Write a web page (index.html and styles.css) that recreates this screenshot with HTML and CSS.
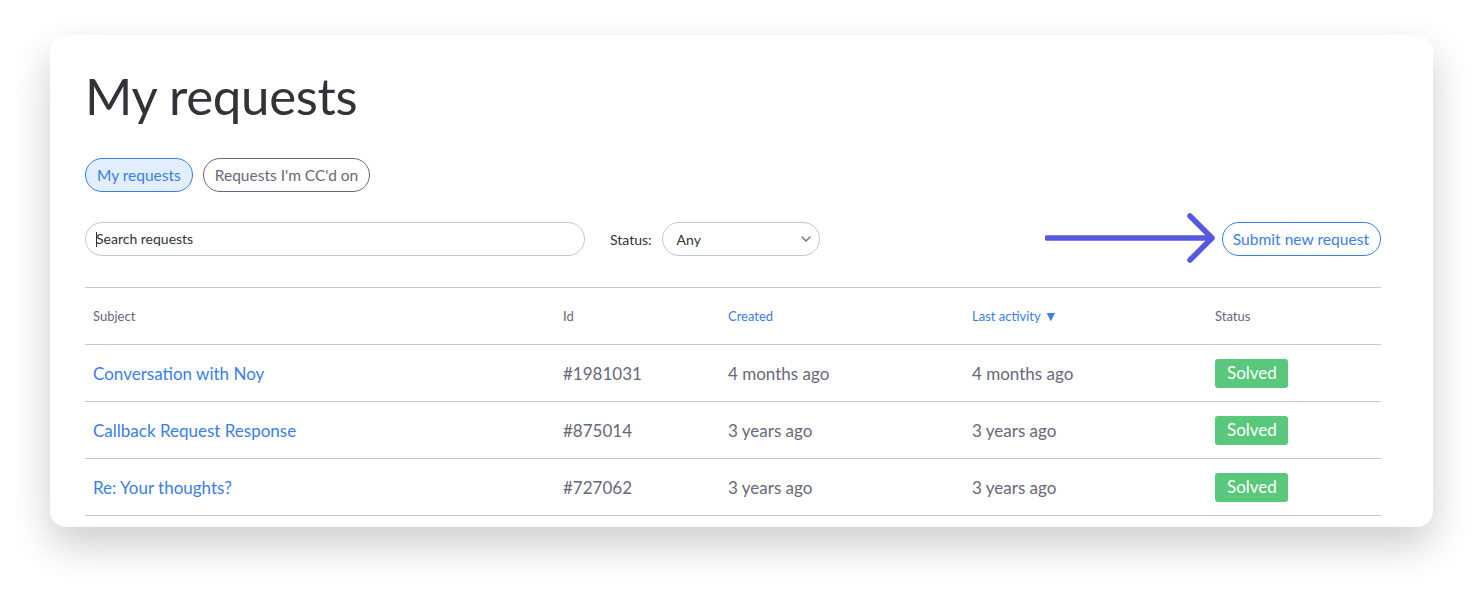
FILE: index.html
```html
<!DOCTYPE html>
<html lang="en">
<head>
  <meta charset="UTF-8" />
  <meta name="viewport" content="width=device-width, initial-scale=1.0"/>
  <title>My requests</title>
  <link rel="stylesheet" href="styles.css">
</head>
<body>
  <div class="card">
    <h1>My requests</h1>

    <nav class="tabs">
      <a class="tab active" href="#">My requests</a>
      <a class="tab" href="#">Requests I'm CC'd on</a>
    </nav>

    <div class="toolbar">
      <div class="search"><span class="caret"></span>Search requests</div>
      <label class="status-label">Status:</label>
      <div class="select">
        <span>Any</span>
        <svg class="chevron" width="10" height="6" viewBox="0 0 10 6"><path d="M1 1l4 4 4-4" fill="none" stroke="#676879" stroke-width="1.2" stroke-linecap="round" stroke-linejoin="round"/></svg>
      </div>
      <svg class="arrow" width="174" height="52" viewBox="0 0 174 52">
        <path d="M2 25H167M145 3l22 22-22 22" fill="none" stroke="#5559df" stroke-width="5.5" stroke-linecap="round" stroke-linejoin="round"/>
      </svg>
      <a class="submit" href="#">Submit new request</a>
    </div>

    <table class="requests">
      <colgroup>
        <col style="width:470px">
        <col style="width:165px">
        <col style="width:244px">
        <col style="width:243px">
        <col>
      </colgroup>
      <thead>
        <tr>
          <th>Subject</th>
          <th>Id</th>
          <th class="sort">Created</th>
          <th class="sort">Last activity <span class="tri">&#9660;</span></th>
          <th>Status</th>
        </tr>
      </thead>
      <tbody>
        <tr>
          <td><a href="#">Conversation with Noy</a></td>
          <td>#1981031</td>
          <td>4 months ago</td>
          <td>4 months ago</td>
          <td><span class="badge">Solved</span></td>
        </tr>
        <tr>
          <td><a href="#">Callback Request Response</a></td>
          <td>#875014</td>
          <td>3 years ago</td>
          <td>3 years ago</td>
          <td><span class="badge">Solved</span></td>
        </tr>
        <tr>
          <td><a href="#">Re: Your thoughts?</a></td>
          <td>#727062</td>
          <td>3 years ago</td>
          <td>3 years ago</td>
          <td><span class="badge">Solved</span></td>
        </tr>
      </tbody>
    </table>
  </div>
</body>
</html>
```

FILE: styles.css
```css
body {
  margin: 0;
  padding: 35px 50px 66px 50px;
  background: #ffffff;
  font-family: 'Lato', sans-serif;
  color: #323338;
}

.card {
  background: white;
  border-radius: 16px;
  padding: 26px 52px 11px 35px;
  box-shadow: 0 18px 40px rgba(0,0,0,0.2);
}

h1 {
  margin: 0;
  font-size: 51px;
  font-weight: 400;
  line-height: 70px;
  letter-spacing: -0.3px;
  color: #323338;
}

.tabs {
  display: flex;
  gap: 10px;
  margin-top: 27px;
}

.tab {
  display: inline-block;
  height: 32px;
  line-height: 32px;
  padding: 0 11px;
  border: 1px solid #676879;
  border-radius: 17px;
  font-size: 15.5px;
  color: #676879;
  text-decoration: none;
}

.tab.active {
  background: #e1eefd;
  border-color: #3b7de9;
  color: #3b7de9;
}

.toolbar {
  display: flex;
  align-items: center;
  margin-top: 30px;
  height: 34px;
}

.search {
  width: 488px;
  height: 32px;
  line-height: 32px;
  padding-left: 10px;
  border: 1px solid #c3c6d4;
  border-radius: 17px;
  font-size: 14px;
  color: #323338;
  display: flex;
  align-items: center;
}

.caret {
  width: 1px;
  height: 15px;
  background: #323338;
  margin-right: -1px;
}

.status-label {
  margin-left: 25px;
  font-size: 14px;
  color: #323338;
}

.select {
  margin-left: 10px;
  width: 158px;
  height: 34px;
  border: 1px solid #c3c6d4;
  border-radius: 17px;
  display: flex;
  align-items: center;
  justify-content: space-between;
  padding: 0 8px 0 14px;
  box-sizing: border-box;
  font-size: 14px;
}

.arrow {
  margin-left: auto;
  margin-right: 3px;
}

.submit {
  height: 32px;
  line-height: 32px;
  padding: 0 11px 0 10px;
  border: 1px solid #3b7de9;
  border-radius: 17px;
  font-size: 15.6px;
  color: #3b7de9;
  text-decoration: none;
}

.requests {
  width: 100%;
  margin-top: 31px;
  border-collapse: collapse;
  table-layout: fixed;
}

.requests th,
.requests td {
  text-align: left;
  padding: 0 8px;
  border-top: 1px solid #c5c7d0;
  border-bottom: 1px solid #c5c7d0;
}

.requests th {
  height: 56px;
  font-size: 13px;
  font-weight: 400;
  color: #676879;
}

.requests th.sort {
  color: #3b7de9;
}

.tri {
  font-size: 14px;
  line-height: 1;
}

.requests td {
  height: 56px;
  font-size: 17px;
  color: #676879;
}

.requests td a {
  color: #3b7de9;
  text-decoration: none;
}

.badge {
  display: inline-block;
  padding: 0 11px 0 12px;
  height: 29px;
  line-height: 28px;
  background: #5ac87c;
  color: white;
  border-radius: 3px;
}
```
